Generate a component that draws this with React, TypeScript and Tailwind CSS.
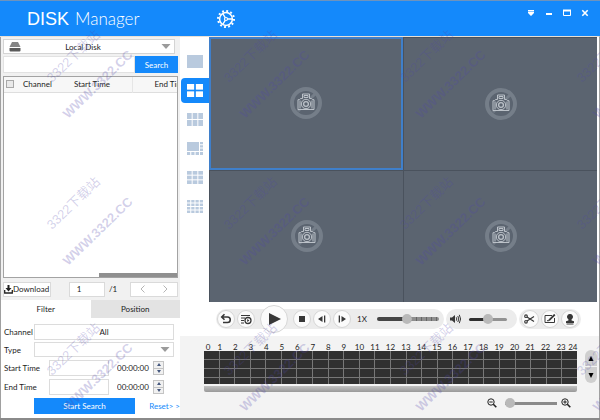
import React, { useState } from 'react';

const HOURS = Array.from({ length: 23 }, (_, i) => i + 1);
const WATERMARK_X = [47, 224, 400, 577];
const WATERMARK_Y = [82, 229, 375];

const roundButton =
  'flex items-center justify-center w-[18px] h-[18px] rounded-full bg-[#fbfbfb] border border-[#d6d6d6] text-[#383838]';
const field = 'h-4 min-w-0 bg-white border border-[#dcdcdc] px-1 outline-none';
const thumb =
  'appearance-none [&::-webkit-slider-thumb]:appearance-none [&::-webkit-slider-thumb]:rounded-full [&::-webkit-slider-thumb]:bg-[#b9b9b9] [&::-webkit-slider-thumb]:w-[10px] [&::-webkit-slider-thumb]:h-[10px]';

function GearIcon() {
  return (
    <svg width="20" height="20" viewBox="0 0 20 20" fill="none" stroke="white">
      <circle cx="10" cy="10" r="6.4" strokeWidth="1.5" />
      <circle cx="10" cy="10" r="8" strokeWidth="2" strokeDasharray="1.9 2.289" />
      <circle cx="10" cy="10" r="1.5" strokeWidth="1.2" />
      <path d="M11.5 10H16M9.2 8.7L6.8 4.6M9.2 11.3L6.8 15.4" strokeWidth="1.3" />
    </svg>
  );
}

function CameraIcon() {
  return (
    <svg width="32" height="32" viewBox="0 0 32 32" fill="none">
      <circle cx="16" cy="16" r="14" stroke="#757e89" strokeWidth="4" />
      <path d="M8 24L25 7" stroke="#757e89" strokeWidth="3" />
      <g stroke="#bcc2c9" strokeWidth="1">
        <path
          d="M12.5 11.5V7h7v4.5h2l1 1.2h1.5v9.8h-16v-9.8h1.5l1-1.2z"
          fill="#5b6470"
          strokeLinejoin="round"
        />
        <path d="M14 8.5h4v2h-4zM10 13.5v8M22 13.5v8" />
        <circle cx="16" cy="17" r="4.7" />
        <circle cx="16" cy="17" r="2.4" strokeWidth="1.3" />
      </g>
    </svg>
  );
}

function TileIcon({ cols, rows, gap = 1 }: { cols: number; rows: number; gap?: number }) {
  const w = (16 - (cols - 1) * gap) / cols;
  const h = (13 - (rows - 1) * gap) / rows;
  const cells = Array.from({ length: cols * rows }, (_, i) => i);
  return (
    <svg width="16" height="13" viewBox="0 0 16 13" fill="currentColor">
      {cells.map((i) => (
        <rect key={i} x={(i % cols) * (w + gap)} y={Math.floor(i / cols) * (h + gap)} width={w} height={h} />
      ))}
    </svg>
  );
}

function EightTileIcon() {
  return (
    <svg width="16" height="13" viewBox="0 0 16 13" fill="currentColor">
      <rect width="12" height="9" />
      <path d="M13 0h3v2.3h-3zM13 3.3h3v2.3h-3zM13 6.6h3V9h-3zM0 10h3.2v3H0zM4.3 10h3.2v3H4.3zM8.6 10h3.4v3H8.6zM13 10h3v3h-3z" />
    </svg>
  );
}

const layouts = [
  { name: '1 window', icon: <TileIcon cols={1} rows={1} /> },
  { name: '4 windows', icon: <TileIcon cols={2} rows={2} gap={1.7} /> },
  { name: '6 windows', icon: <TileIcon cols={3} rows={2} /> },
  { name: '8 windows', icon: <EightTileIcon /> },
  { name: '9 windows', icon: <TileIcon cols={3} rows={3} /> },
  { name: '16 windows', icon: <TileIcon cols={4} rows={4} /> },
];

function ZoomIcon({ plus }: { plus?: boolean }) {
  return (
    <svg width="10" height="10" viewBox="0 0 10 10" fill="none" stroke="#222">
      <circle cx="4" cy="4" r="3.2" strokeWidth="1" />
      <path d="M6.3 6.3L9.3 9.3" strokeWidth="1.6" />
      <path d={plus ? 'M2.3 4h3.4M4 2.3v3.4' : 'M2.3 4h3.4'} strokeWidth="1" />
    </svg>
  );
}

function Caret() {
  return (
    <svg className="absolute right-1 top-[5px] pointer-events-none" width="10" height="5" viewBox="0 0 10 5">
      <path d="M0.5 0h9L5 5z" fill="#9b9b9b" />
    </svg>
  );
}

function Spinner({ label }: { label: string }) {
  return (
    <div className="flex flex-col w-[11px] h-[14px] border border-[#c4c4c4] bg-[#f1f1f1]">
      <button type="button" aria-label={`${label} up`} className="flex-1 flex items-center justify-center">
        <svg width="4" height="3" viewBox="0 0 4 3">
          <path d="M2 0l2 3H0z" fill="#45587e" />
        </svg>
      </button>
      <button
        type="button"
        aria-label={`${label} down`}
        className="flex-1 flex items-center justify-center border-t border-[#c4c4c4]"
      >
        <svg width="4" height="3" viewBox="0 0 4 3">
          <path d="M0 0h4L2 3z" fill="#45587e" />
        </svg>
      </button>
    </div>
  );
}

function TimeRow({ id, label }: { id: string; label: string }) {
  return (
    <div className="flex items-center h-4">
      <label htmlFor={id} className="w-[45px]">
        {label}
      </label>
      <input id={id} className={`${field} w-[60px]`} />
      <input aria-label={`${label} clock`} defaultValue="00:00:00" className="w-9 ml-2 outline-none" />
      <Spinner label={label} />
    </div>
  );
}

function Header() {
  return (
    <header className="flex items-center h-9 shrink-0 bg-[#1489fb] border-t border-[#6d93bd] text-white">
      <h1 className="flex items-baseline gap-[6px] pl-[27px] w-[216px] leading-5">
        <span className="font-['Liberation_Sans',sans-serif] text-[18px]">DISK</span>
        <span className="font-light text-[17px]">Manager</span>
      </h1>
      <button type="button" aria-label="Settings">
        <GearIcon />
      </button>
      <div className="flex gap-2 ml-auto mr-[10px] mb-3">
        <button type="button" aria-label="Menu">
          <svg width="10" height="10" viewBox="0 0 10 10" fill="white">
            <path d="M2 2h6v1H2zM2 3.5h6V5L5 8 2 5z" />
          </svg>
        </button>
        <button type="button" aria-label="Minimize">
          <svg width="10" height="10" viewBox="0 0 10 10" fill="white">
            <path d="M2 5h6v2H2z" />
          </svg>
        </button>
        <button type="button" aria-label="Maximize">
          <svg width="10" height="10" viewBox="0 0 10 10" fill="none" stroke="white">
            <path d="M1.5 2.5h7v5h-7z" />
            <path d="M1 2.5h8" strokeWidth="2" />
          </svg>
        </button>
        <button type="button" aria-label="Close">
          <svg width="10" height="10" viewBox="0 0 10 10" fill="none" stroke="white" strokeWidth="1.6">
            <path d="M2.3 2.3l5.4 5.4M7.7 2.3L2.3 7.7" />
          </svg>
        </button>
      </div>
    </header>
  );
}

function SearchPanel() {
  const [tab, setTab] = useState('filter');

  return (
    <aside className="flex flex-col w-[180px] shrink-0 bg-[#f1f1f1] border-l border-[#a0a0a0]">
      <div className="flex flex-col flex-1 px-[2px] pt-[2px]">
        <div className="relative mr-[3px]">
          <select
            aria-label="Disk"
            className="appearance-none block w-full h-[15px] pr-3 border border-[#d4d4d4] bg-white text-center"
          >
            <option>Local Disk</option>
          </select>
          <svg className="absolute left-[6px] top-[3px] pointer-events-none" width="12" height="10" viewBox="0 0 12 10">
            <path d="M3 0h6l2.5 5h-11z" fill="#858585" />
            <path d="M0.5 6h11v2.5q0 1-1 1h-9q-1 0-1-1z" fill="#5a5a5a" />
          </svg>
          <Caret />
        </div>
        <div className="flex mt-[2px]">
          <input aria-label="Search text" className="flex-1 min-w-0 h-[17px] px-1 bg-white border border-[#e2e2e2] outline-none" />
          <button type="button" className="w-[43px] h-[17px] bg-[#1489fb] text-white">
            Search
          </button>
        </div>
        <div className="flex flex-col flex-1 mt-[3px] bg-white border border-[#a3a3a3] overflow-hidden">
          <table className="table-fixed w-[240px] border-collapse">
            <thead>
              <tr className="h-[15px] bg-[#f7f7f7] border-b border-[#dedede] text-left">
                <th className="w-[18px]">
                  <input
                    type="checkbox"
                    aria-label="Select all"
                    className="appearance-none block ml-[2px] w-2 h-2 border border-[#a8a8a8] bg-[#e9e9e9]"
                  />
                </th>
                <th className="w-[46px] font-normal pl-[1px]">Channel</th>
                <th className="w-[64px] font-normal pl-[6px]">Start Time</th>
                <th className="font-normal pl-[22px] border-l border-[#e6e6e6]">End Time</th>
              </tr>
            </thead>
          </table>
          <div className="flex mt-auto justify-end h-1">
            <div className="w-[78px] bg-[#8f8f8f]" />
          </div>
        </div>
        <div className="flex items-center h-[22px]">
          <button type="button" className="flex items-center h-[15px] w-[48px] bg-white border border-[#dadada]">
            <svg className="shrink-0" width="9" height="9" viewBox="0 0 9 9" fill="none" stroke="#222">
              <path d="M0.7 5v3h7.6V5" strokeWidth="1.3" />
              <path d="M3.5 0h2v3h2l-3 3.5-3-3.5h2z" fill="#222" stroke="none" />
            </svg>
            Download
          </button>
          <input
            aria-label="Page"
            defaultValue="1"
            className="ml-[18px] w-9 h-[15px] pr-4 bg-white border border-[#dadada] text-center outline-none"
          />
          <span className="ml-1">/1</span>
          <div className="flex items-center justify-around ml-auto w-[48px] h-[15px] bg-white border border-[#dadada]">
            <button type="button" aria-label="Previous page">
              <svg width="5" height="8" viewBox="0 0 5 8" fill="none" stroke="#b5b5b5">
                <path d="M4.5 0.5L1 4l3.5 3.5" />
              </svg>
            </button>
            <button type="button" aria-label="Next page">
              <svg width="5" height="8" viewBox="0 0 5 8" fill="none" stroke="#b5b5b5">
                <path d="M0.5 0.5L4 4 0.5 7.5" />
              </svg>
            </button>
          </div>
        </div>
      </div>
      <div className="flex h-[18px]">
        <button type="button" onClick={() => setTab('filter')} className={`flex-1 ${tab === 'filter' ? 'bg-white' : 'bg-[#e3e3e3]'}`}>
          Filter
        </button>
        <button type="button" onClick={() => setTab('position')} className={`flex-1 ${tab === 'position' ? 'bg-white' : 'bg-[#e3e3e3]'}`}>
          Position
        </button>
      </div>
      <form className="flex flex-col gap-[3px] bg-white pl-[3px] pt-[6px] pb-1" onSubmit={(e) => e.preventDefault()}>
        <div className="flex flex-col gap-[2px] pr-[6px]">
          <div className="flex items-center">
            <label htmlFor="channel" className="w-[30px]">
              Channel
            </label>
            <input id="channel" defaultValue="All" className={`${field} flex-1 text-center`} />
          </div>
          <div className="flex items-center">
            <label htmlFor="type" className="w-[30px]">
              Type
            </label>
            <div className="relative flex-1">
              <select id="type" className="appearance-none block w-full h-[15px] bg-white border border-[#dcdcdc]" />
              <Caret />
            </div>
          </div>
        </div>
        <TimeRow id="start" label="Start Time" />
        <TimeRow id="end" label="End Time" />
        <div className="flex items-center">
          <button type="submit" className="ml-[30px] w-[101px] h-4 bg-[#1489fb] text-white">
            Start Search
          </button>
          <a href="#reset" className="ml-auto text-[#1489fb] whitespace-nowrap">
            Reset&gt; &gt;
          </a>
        </div>
      </form>
    </aside>
  );
}

function VideoArea() {
  const [active, setActive] = useState(1);

  return (
    <div className="flex flex-1">
      <nav className="flex flex-col gap-1 w-[29px] pl-px pt-3">
        {layouts.map((layout, i) => (
          <button
            key={layout.name}
            type="button"
            aria-label={layout.name}
            onClick={() => setActive(i)}
            className={`flex items-center justify-center h-[25px] rounded-l-[4px] ${
              i === active ? 'bg-[#1489fb] text-white' : 'text-[#b9cade]'
            }`}
          >
            {layout.icon}
          </button>
        ))}
      </nav>
      <div className="grid grid-cols-2 grid-rows-2 flex-1 mr-[2px] bg-[#5b6470]">
        {[0, 1, 2, 3].map((i) => (
          <div
            key={i}
            className={`flex items-center justify-center ${
              i === 0 ? 'border-2 border-[#3f7fca]' : 'border-t border-l border-[#4a525d]'
            }`}
          >
            <CameraIcon />
          </div>
        ))}
      </div>
    </div>
  );
}

function Controls() {
  return (
    <div className="flex items-center gap-[2px] h-[34px] pl-9">
      <div className="flex items-center gap-[2px] h-5 px-[1px] rounded-full bg-[#ececec]">
        <button type="button" aria-label="Back" className={roundButton}>
          <svg width="12" height="12" viewBox="0 0 12 12" fill="none" stroke="currentColor" strokeWidth="1.6">
            <path d="M2 4h5.5a2.7 2.7 0 0 1 0 5.5H3M4.5 1.2L1.7 4l2.8 2.8" />
          </svg>
        </button>
        <button type="button" aria-label="Play list" className={roundButton}>
          <svg width="12" height="12" viewBox="0 0 12 12" fill="none" stroke="currentColor">
            <path d="M1 2.5h9M1 5h4M1 7.5h3M1 10h3" />
            <circle cx="8" cy="7.5" r="3" strokeWidth="1.3" />
            <path d="M7.2 6l2.2 1.5L7.2 9z" fill="currentColor" stroke="none" />
          </svg>
        </button>
        <button
          type="button"
          aria-label="Play"
          className="flex items-center justify-center w-7 h-7 mx-[3px] rounded-full bg-[#fbfbfb] border border-[#d6d6d6]"
        >
          <svg width="14" height="14" viewBox="0 0 14 14">
            <path d="M2 1l12 6-12 6z" fill="#383838" />
          </svg>
        </button>
        <button type="button" aria-label="Stop" className={roundButton}>
          <svg width="6" height="6" viewBox="0 0 6 6">
            <path d="M0 0h6v6H0z" fill="#383838" />
          </svg>
        </button>
        <button type="button" aria-label="Previous frame" className={roundButton}>
          <svg width="8" height="8" viewBox="0 0 8 8" fill="currentColor">
            <path d="M4.5 1v6L0 4zM6 0.5h1.3v7H6z" />
          </svg>
        </button>
        <button type="button" aria-label="Next frame" className={roundButton}>
          <svg width="8" height="8" viewBox="0 0 8 8" fill="currentColor">
            <path d="M3.5 1v6L8 4zM0.7 0.5H2v7H0.7z" />
          </svg>
        </button>
        <span className="ml-1 mr-2">1X</span>
        <input
          type="range"
          aria-label="Speed"
          defaultValue="48"
          className={`w-[62px] h-1 mr-1 rounded-full bg-[linear-gradient(to_right,#454545_50%,transparent_50%),repeating-linear-gradient(to_right,#8e8e8e_0_4px,#666_4px_5px)] ${thumb}`}
        />
      </div>
      <div className="flex items-center gap-2 h-5 pl-1 pr-[10px] rounded-full bg-[#ececec]">
        <svg width="11" height="10" viewBox="0 0 11 10" fill="none" stroke="#383838">
          <path d="M0 3.5h2L5 1v8L2 6.5H0z" fill="#383838" stroke="none" />
          <path d="M6.3 3.3q1 1.7 0 3.4M7.8 2q2 3 0 6M9.3 0.8q2.6 4.2 0 8.4" />
        </svg>
        <input
          type="range"
          aria-label="Volume"
          defaultValue="50"
          className={`w-[38px] h-[3px] rounded-full bg-[linear-gradient(to_right,#2f2f2f_50%,#929292_50%)] ${thumb}`}
        />
      </div>
      <div className="flex items-center gap-[2px] h-5 px-[2px] rounded-full bg-[#ececec]">
        <button type="button" aria-label="Cut" className={roundButton}>
          <svg width="11" height="10" viewBox="0 0 11 10" fill="none" stroke="currentColor" strokeWidth="1.2">
            <circle cx="2" cy="2.2" r="1.3" />
            <circle cx="2" cy="7.8" r="1.3" />
            <path d="M3 3l7 4.5M3 7l7-4.5" />
          </svg>
        </button>
        <button type="button" aria-label="Edit" className={roundButton}>
          <svg width="12" height="10" viewBox="0 0 12 10" fill="none" stroke="currentColor">
            <path d="M8 1.5H1v7h9.5V4" />
            <path d="M10.8 0.5L5 6.3" strokeWidth="1.8" />
            <path d="M3 6.7h2" />
          </svg>
        </button>
        <button type="button" aria-label="Stamp" className={roundButton}>
          <svg width="10" height="11" viewBox="0 0 10 11" fill="currentColor">
            <path d="M5 0a2.8 2.8 0 0 1 1.6 5.2V6.5L9 7.3V9H1V7.3l2.4-.8V5.2A2.8 2.8 0 0 1 5 0zM1.5 9.6h7v1h-7z" />
          </svg>
        </button>
      </div>
    </div>
  );
}

function Timeline() {
  return (
    <div className="bg-[#f3f3f3] pl-6 pr-[2px] pt-[6px] pb-[10px]">
      <div className="flex gap-2">
        <div className="flex-1">
          <div className="flex h-[9px] leading-[11px] text-center">
            <span className="w-2">0</span>
            {HOURS.map((hour) => (
              <span key={hour} className="flex-1 w-0">
                {hour}
              </span>
            ))}
            <span className="flex w-2 justify-center">24</span>
          </div>
          <div className="grid grid-cols-24 grid-rows-[8px_8px_8px_6px] gap-px bg-[#777]">
            {Array.from({ length: 96 }, (_, i) => (
              <div key={i} className="bg-[#303030]" />
            ))}
          </div>
          <div className="h-[6px] mt-[2px] rounded-b-[2px] bg-linear-to-b from-[#c2c2c2] to-[#999]" />
        </div>
        <div className="flex flex-col w-3 h-[33px] mt-2 rounded-full bg-[#cfcfcf]">
          <button type="button" aria-label="Scroll up" className="flex flex-1 items-center justify-center">
            <svg width="6" height="5" viewBox="0 0 6 5">
              <path d="M3 0l2.5 5h-5z" />
            </svg>
          </button>
          <button
            type="button"
            aria-label="Scroll down"
            className="flex flex-1 items-center justify-center border-t border-[#f3f3f3]"
          >
            <svg width="6" height="5" viewBox="0 0 6 5">
              <path d="M0.5 0h5L3 5z" />
            </svg>
          </button>
        </div>
      </div>
      <div className="flex items-center justify-end gap-1 mt-[6px] pr-[26px]">
        <button type="button" aria-label="Zoom out" className="mr-1">
          <ZoomIcon />
        </button>
        <input
          type="range"
          aria-label="Timeline zoom"
          defaultValue="0"
          className={`w-[52px] h-[3px] bg-[#8a8a8a] ${thumb}`}
        />
        <button type="button" aria-label="Zoom in">
          <ZoomIcon plus />
        </button>
      </div>
    </div>
  );
}

function Watermark() {
  return (
    <svg
      className="absolute inset-0 w-full h-full pointer-events-none font-['Liberation_Sans','Noto_Sans_CJK_SC',sans-serif]"
      fill="#5046aa"
      fillOpacity="0.25"
    >
      {WATERMARK_Y.map((y) =>
        WATERMARK_X.map((x) => (
          <g key={`${x}-${y}`}>
            <text transform={`translate(${x + 5} ${y + 1}) rotate(-44)`} fontSize="13">
              3322下载站
            </text>
            <text transform={`translate(${x + 21} ${y + 37}) rotate(-44)`} fontSize="13" fontWeight="bold">
              WWW.3322.CC
            </text>
          </g>
        ))
      )}
    </svg>
  );
}

export default function App() {
  return (
    <div className="relative flex flex-col min-h-screen overflow-hidden bg-white border-b-2 border-[#8a8a8a] font-['Lato',sans-serif] text-[8px] leading-[10px] text-[#1c1c1c]">
      <Header />
      <div className="flex flex-1 border-t border-[#e8e0d6] border-r border-r-[#a0a0a0]">
        <SearchPanel />
        <main className="flex flex-col flex-1 min-w-0">
          <VideoArea />
          <Controls />
          <Timeline />
        </main>
      </div>
      <Watermark />
    </div>
  );
}
